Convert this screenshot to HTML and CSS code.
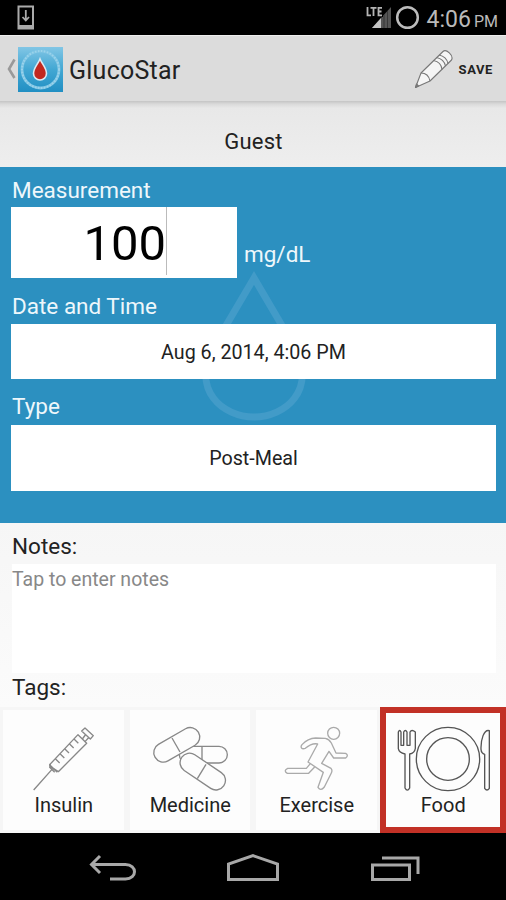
FILE: index.html
```
<!DOCTYPE html>
<html lang="en">
  <head>
    <meta charset="UTF-8" />
    <meta name="viewport" content="width=device-width, initial-scale=1.0" />
    <title>GlucoStar</title>
    <link rel="stylesheet" href="styles.css">
  </head>
  <body>
    <div class="screen">
      <div class="status-bar">
        <svg class="download-icon" width="18" height="25" viewBox="0 0 18 25">
          <path d="M1.5 1.5h14.5v22H1.5z" fill="none" stroke="#aaa" stroke-width="2" />
          <path d="M2 20h14v4H2z" fill="#aaa" />
          <path d="M8.8 5v10M5.5 12l3.3 3.5L12 12" fill="none" stroke="#aaa" stroke-width="1.8" />
        </svg>
        <div class="status-right">
          <svg width="26" height="24" viewBox="0 0 26 24">
            <path d="M6 22L25 1v21z" fill="#555" />
            <path d="M6 22L15 12v10z" fill="#c4c4c4" />
            <path d="M18 9v13M21.5 5v17" stroke="#373737" />
            <path d="M0 0h17v11H0z" fill="#000" />
            <path d="M1.5 1v8.3h3.5M4.5 1.8h6M7.5 1.8V10M16 1.8h-3.5v7.5H16M12 5.5h3.5" fill="none" stroke="#b5b5b5" stroke-width="1.8" />
          </svg>
          <svg class="battery" width="25" height="25" viewBox="0 0 25 25">
            <circle cx="12.5" cy="12.5" r="10.3" fill="none" stroke="#bcbcbc" stroke-width="2.5" />
          </svg>
          <span class="clock">4:06</span>
          <span class="ampm">PM</span>
        </div>
      </div>

      <div class="action-bar">
        <svg class="back" width="10" height="22" viewBox="0 0 10 22">
          <path d="M8.5 1.5L3 11l5.5 9" fill="none" stroke="#999" stroke-width="2.6" />
        </svg>
        <svg class="logo" width="45" height="45" viewBox="0 0 45 45">
          <defs>
            <linearGradient id="sky" x1="0" y1="0" x2="0" y2="1">
              <stop offset="0" stop-color="#82c6e5" />
              <stop offset="0.5" stop-color="#42a7d3" />
              <stop offset="1" stop-color="#218fc3" />
            </linearGradient>
          </defs>
          <rect width="45" height="45" fill="url(#sky)" />
          <circle cx="22.5" cy="22.5" r="18.5" fill="none" stroke="#7fc5e4" stroke-width="2.8" />
          <circle cx="22.5" cy="22.5" r="18.5" fill="none" stroke="#9bd3eb" stroke-width="2" stroke-dasharray="1.5 1.5" />
          <path d="M22 12C20 17 15.5 21 15.5 26.5a6.5 6.5 0 0 0 13 0C28.5 21 24 17 22 12z" fill="#c1281f" stroke="#dceaf2" stroke-width="1.6" />
        </svg>
        <h1>GlucoStar</h1>
        <svg class="pencil" width="40" height="40" viewBox="0 0 40 40">
          <g fill="#f5f5f5" stroke="#777" stroke-width="1.1" stroke-linejoin="round">
            <path d="M1.5 38.5L7 24 29 2.5c3-3 11 4 8.5 8.5L16 32z" />
            <path d="M7 24c5 0 8 3 9 8M19.5 11.5c5 1 8 4 8.5 9M22.5 8.5c5 1 8 4 9 8.5M25 6c5 1 8 4 9 8.5" fill="none" />
            <path d="M1.5 38.5l1-3.5 2 2z" fill="#888" />
          </g>
        </svg>
        <span class="save">SAVE</span>
      </div>

      <div class="user">Guest</div>

      <div class="reading">
        <svg class="drop" width="104" height="154" viewBox="0 0 104 154">
          <path d="M52 8L12 76C-12 120 21 147 52 147s64-27 40-71z" fill="none" stroke="#429bc8" stroke-width="7" />
        </svg>
        <div class="label">Measurement</div>
        <div class="measure-row">
          <div class="measure"><span class="value">100</span></div>
          <span class="unit">mg/dL</span>
        </div>
        <div class="label date-label">Date and Time</div>
        <div class="field date">Aug 6, 2014, 4:06 PM</div>
        <div class="label type-label">Type</div>
        <div class="field type">Post-Meal</div>
      </div>

      <div class="notes">
        <div class="notes-label">Notes:</div>
        <div class="notes-input">Tap to enter notes</div>
        <div class="tags-label">Tags:</div>
      </div>

      <div class="tags">
        <div class="tag">
          <svg viewBox="0 0 360 210">
            <path d="M92 198L147 136M140 122L225 32 251 58 166 143 152 134z" />
            <path d="M139 124l24 21M142 120l-2 10 15 15M157 104l13 13M171 89l13 13M185 74l13 13M199 59l13 13M213 45l13 13" />
            <path d="M238 45l9-12M246 53l10-11M236 21l10-9 25 23-9 10z" />
          </svg>
          <span>Insulin</span>
        </div>
        <div class="tag">
          <svg viewBox="0 0 360 210">
            <rect x="148" y="67" width="144" height="50" rx="25" />
            <path d="M216 67v50" />
            <rect class="pill" x="65" y="34" width="150" height="57" rx="28" transform="rotate(-30 140 62)" />
            <path d="M126 42l24 42" />
            <rect class="pill" x="142" y="114" width="152" height="57" rx="28" transform="rotate(34 218 143)" />
            <path d="M228 121l-26 43" />
          </svg>
          <span>Medicine</span>
        </div>
        <div class="tag">
          <svg class="runner" viewBox="0 0 360 210">
            <circle cx="233" cy="28" r="18" />
            <path d="M138 62Q155 43 179 42L208 43Q219 45 226 57L240 87 269 88Q279 94 269 102L233 102 219 82 197 118 225 133Q230 139 226 147L205 189Q194 203 186 190L202 145 156 114 185 60Q168 56 148 73C137 77 132 70 138 62z" />
            <path d="M163 119L151 133H95Q81 140 94 148H158L176 129" />
          </svg>
          <span>Exercise</span>
        </div>
        <div class="tag selected">
          <svg class="food" viewBox="0 0 360 210">
            <circle cx="195" cy="105" r="95" />
            <circle cx="195" cy="105" r="64" />
            <path d="M46 24q4-9 8 0v40h8V24q5-9 10 0v40h9V24q5-9 16 0v49q-2 14-17 17v102q-7 13-14 0V90Q48 86 46 74z" />
            <path d="M319 20C303 15 293 46 294 76q1 12 11 15v102q7 10 14 0z" />
          </svg>
          <span>Food</span>
        </div>
      </div>

      <div class="nav-bar">
        <svg width="50" height="30" viewBox="0 0 50 30">
          <path d="M13 2L4.5 10.5 13 19M4.5 10.5h34c12 0 12 14.500 0 14.500H23" />
        </svg>
        <svg width="54" height="30" viewBox="0 0 54 30">
          <path d="M2.5 25.500V10L27 1.700 51.500 10v15.500z" />
        </svg>
        <svg width="52" height="30" viewBox="0 0 52 30">
          <path d="M3.500 11h37v14.500h-37zM13 4h36v16" />
        </svg>
      </div>
    </div>
  </body>
</html>
```

FILE: styles.css
```
body {
  font-family: Roboto, "Liberation Sans", sans-serif;
  background-color: #000;
  margin: 0;
  color: #222;
}

.screen {
  width: 506px;
  height: 900px;
  overflow: hidden;
  display: flex;
  flex-direction: column;
}

svg {
  display: block;
  flex-shrink: 0;
}

.status-bar {
  height: 35px;
  display: flex;
  justify-content: space-between;
  align-items: center;
  padding: 0 8px 0 17px;
  background-color: #000;
}

.status-right {
  display: flex;
  align-items: center;
  color: #bababa;
}

.battery {
  margin-left: 3px;
}

.clock {
  font-size: 23px;
  margin: 3px 0 0 7px;
}

.ampm {
  font-size: 16px;
  margin: 7px 0 0 3px;
}

.action-bar {
  height: 66px;
  box-sizing: border-box;
  display: flex;
  align-items: center;
  padding: 1px 13px 0 6px;
  background-color: #dcdcdc;
  border-top: 1px solid #eee;
}

.logo {
  margin-left: 2px;
}

h1 {
  margin: 3px 0 0 6px;
  font-size: 25px;
  font-weight: 400;
  letter-spacing: 0.25px;
}

.pencil {
  margin-left: auto;
}

.save {
  font-size: 13px;
  font-weight: 700;
  letter-spacing: 0.6px;
  margin: 0 0 0 5px;
}

.user {
  height: 66px;
  box-sizing: border-box;
  padding: 27px 0 0 1px;
  line-height: 28px;
  font-size: 22px;
  letter-spacing: 0.2px;
  text-align: center;
  background: linear-gradient(#c4c4c4, #dadada 3px, #e8e8e8 7px, #eee);
}

.reading {
  position: relative;
  height: 356px;
  box-sizing: border-box;
  padding: 9px 10px 0 11px;
  background-color: #2c90c0;
}

.drop {
  position: absolute;
  left: 202px;
  top: 103px;
}

.label {
  height: 31px;
  padding-left: 1px;
  line-height: 29px;
  font-size: 22.5px;
  color: #eef7fb;
}

.measure-row {
  display: flex;
  align-items: flex-end;
}

.measure {
  width: 226px;
  height: 71px;
  box-sizing: border-box;
  padding-right: 70px;
  display: flex;
  justify-content: flex-end;
  background-color: #fff;
}

.value {
  height: 68px;
  line-height: 73px;
  font-size: 49px;
  color: #000;
  border-right: 1px solid #bbb;
}

.unit {
  margin-left: 7px;
  line-height: 48px;
  font-size: 22.5px;
  color: #eef7fb;
}

.date-label {
  margin-top: 15px;
  line-height: 26px;
}

.field {
  position: relative;
  background-color: #fff;
  font-size: 19.7px;
  text-align: center;
}

.date {
  height: 55px;
  line-height: 57px;
}

.type-label {
  margin-top: 15px;
  line-height: 25px;
}

.type {
  height: 66px;
  line-height: 68px;
}

.notes {
  height: 184px;
  box-sizing: border-box;
  padding: 9px 10px 0 12px;
  background: linear-gradient(#f6f6f6, #fbfbfb);
}

.notes-label,
.tags-label {
  height: 32px;
  line-height: 29px;
  font-size: 22.5px;
}

.notes-input {
  height: 109px;
  line-height: 31px;
  font-size: 19.5px;
  color: #888;
  background-color: #fff;
}

.tags {
  height: 126px;
  display: grid;
  grid-template-columns: repeat(4, minmax(0, 1fr));
  background-color: #f6f6f6;
}

.tag {
  box-sizing: border-box;
  border: 3px solid #f6f6f6;
  padding-top: 14px;
  background-color: #fdfdfd;
  display: flex;
  flex-direction: column;
  align-items: center;
  font-size: 20px;
}

.tag svg {
  width: 120px;
  height: 70px;
  fill: none;
  stroke: #888;
  stroke-width: 4;
  stroke-linejoin: round;
}

.tag .pill {
  fill: #fdfdfd;
}

.tag .runner {
  stroke: #aaa;
}

.tag .food {
  stroke: #555;
}

.tag span {
  line-height: 23px;
  padding-left: 1px;
}

.selected {
  border: 6px solid #c23126;
  padding-top: 11px;
}

.nav-bar {
  height: 67px;
  box-sizing: border-box;
  display: flex;
  justify-content: space-between;
  padding: 21px 85px 0 87px;
  background-color: #000;
}

.nav-bar svg {
  fill: none;
  stroke: #a8a8a8;
  stroke-width: 3;
}
```
